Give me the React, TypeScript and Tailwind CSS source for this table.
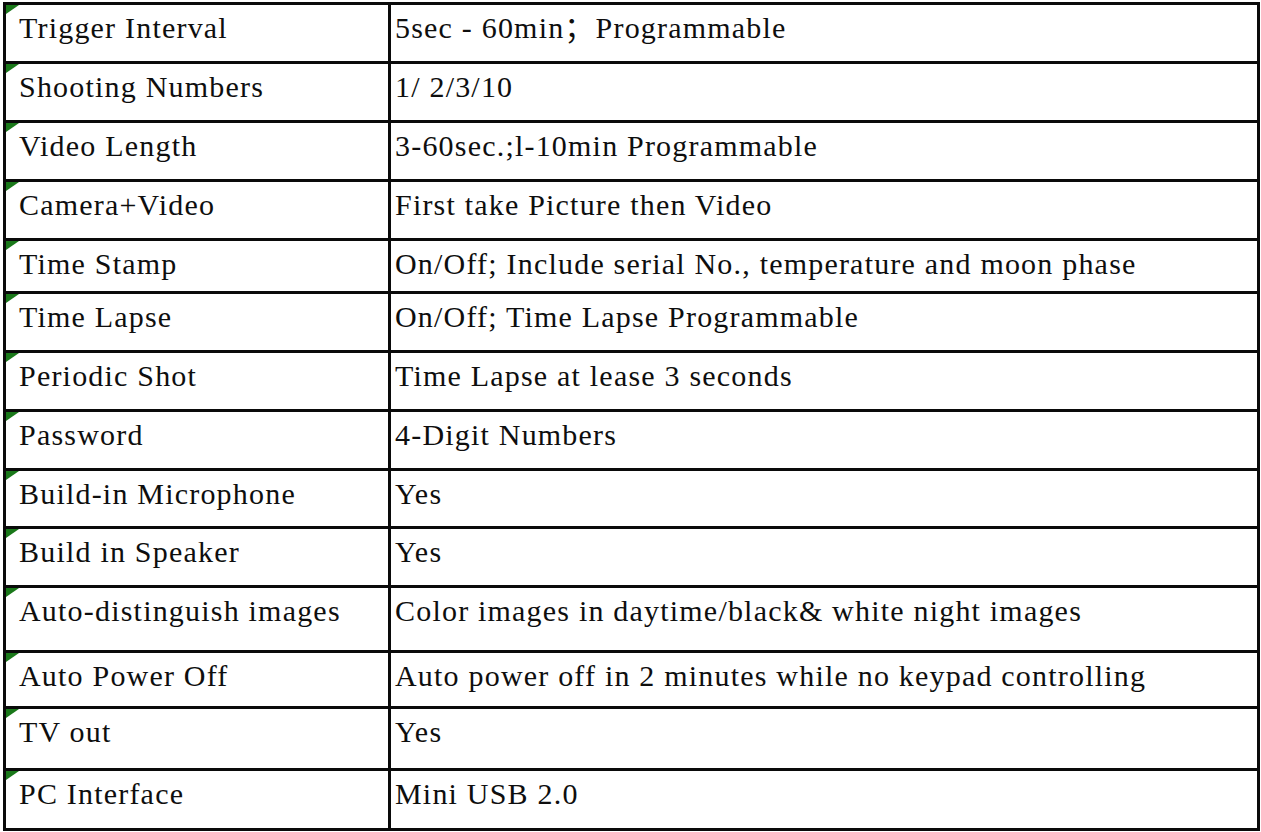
const rows = [
  { label: 'Trigger Interval', value: '5sec - 60min；Programmable', h: 'h-[59px]' },
  { label: 'Shooting Numbers', value: '1/ 2/3/10', h: 'h-[59px]' },
  { label: 'Video Length', value: '3-60sec.;l-10min Programmable', h: 'h-[59px]' },
  { label: 'Camera+Video', value: 'First take Picture then Video', h: 'h-[59px]' },
  { label: 'Time Stamp', value: 'On/Off; Include serial No., temperature and moon phase', h: 'h-[53px]' },
  { label: 'Time Lapse', value: 'On/Off; Time Lapse Programmable', h: 'h-[59px]' },
  { label: 'Periodic Shot', value: 'Time Lapse at lease 3 seconds', h: 'h-[59px]' },
  { label: 'Password', value: '4-Digit Numbers', h: 'h-[59px]' },
  { label: 'Build-in Microphone', value: 'Yes', h: 'h-[58px]' },
  { label: 'Build in Speaker', value: 'Yes', h: 'h-[59px]' },
  { label: 'Auto-distinguish images', value: 'Color images in daytime/black& white night images', h: 'h-[65px]' },
  { label: 'Auto Power Off', value: 'Auto power off in 2 minutes while no keypad controlling', h: 'h-[56px]' },
  { label: 'TV out', value: 'Yes', h: 'h-[62px]' },
  { label: 'PC Interface', value: 'Mini USB 2.0', h: 'h-[60px]' },
];

// little green corner mark, like a spreadsheet cell flag
function CornerFlag() {
  return (
    <svg className="absolute left-0 top-0" width="13" height="9" viewBox="0 0 13 9">
      <polygon points="0,0 13,0 0,9" fill="#1a781a" />
    </svg>
  );
}

export default function App() {
  return (
    <div className="min-h-[832px] w-[1261px] bg-white pl-[3px] pt-[2px]">
      <div
        className="w-[1257px] border-x-[3px] border-t-[3px] border-[#0a0a0a] text-[30px] leading-[32px] tracking-[1.2px] text-[#0e0e0e]"
        style={{ fontFamily: '"Liberation Serif", "Noto Sans CJK SC", serif' }}
      >
        {rows.map((row) => (
          <div key={row.label} className={`grid grid-cols-[385px_1fr] border-b-[3px] border-[#0a0a0a] ${row.h}`}>
            <div className="relative border-r-[3px] border-[#0a0a0a] pl-[13px] pt-[7px]">
              <CornerFlag />
              <span className="whitespace-nowrap">{row.label}</span>
            </div>
            <div className="pl-[4px] pt-[7px] whitespace-nowrap">{row.value}</div>
          </div>
        ))}
      </div>
    </div>
  );
}
